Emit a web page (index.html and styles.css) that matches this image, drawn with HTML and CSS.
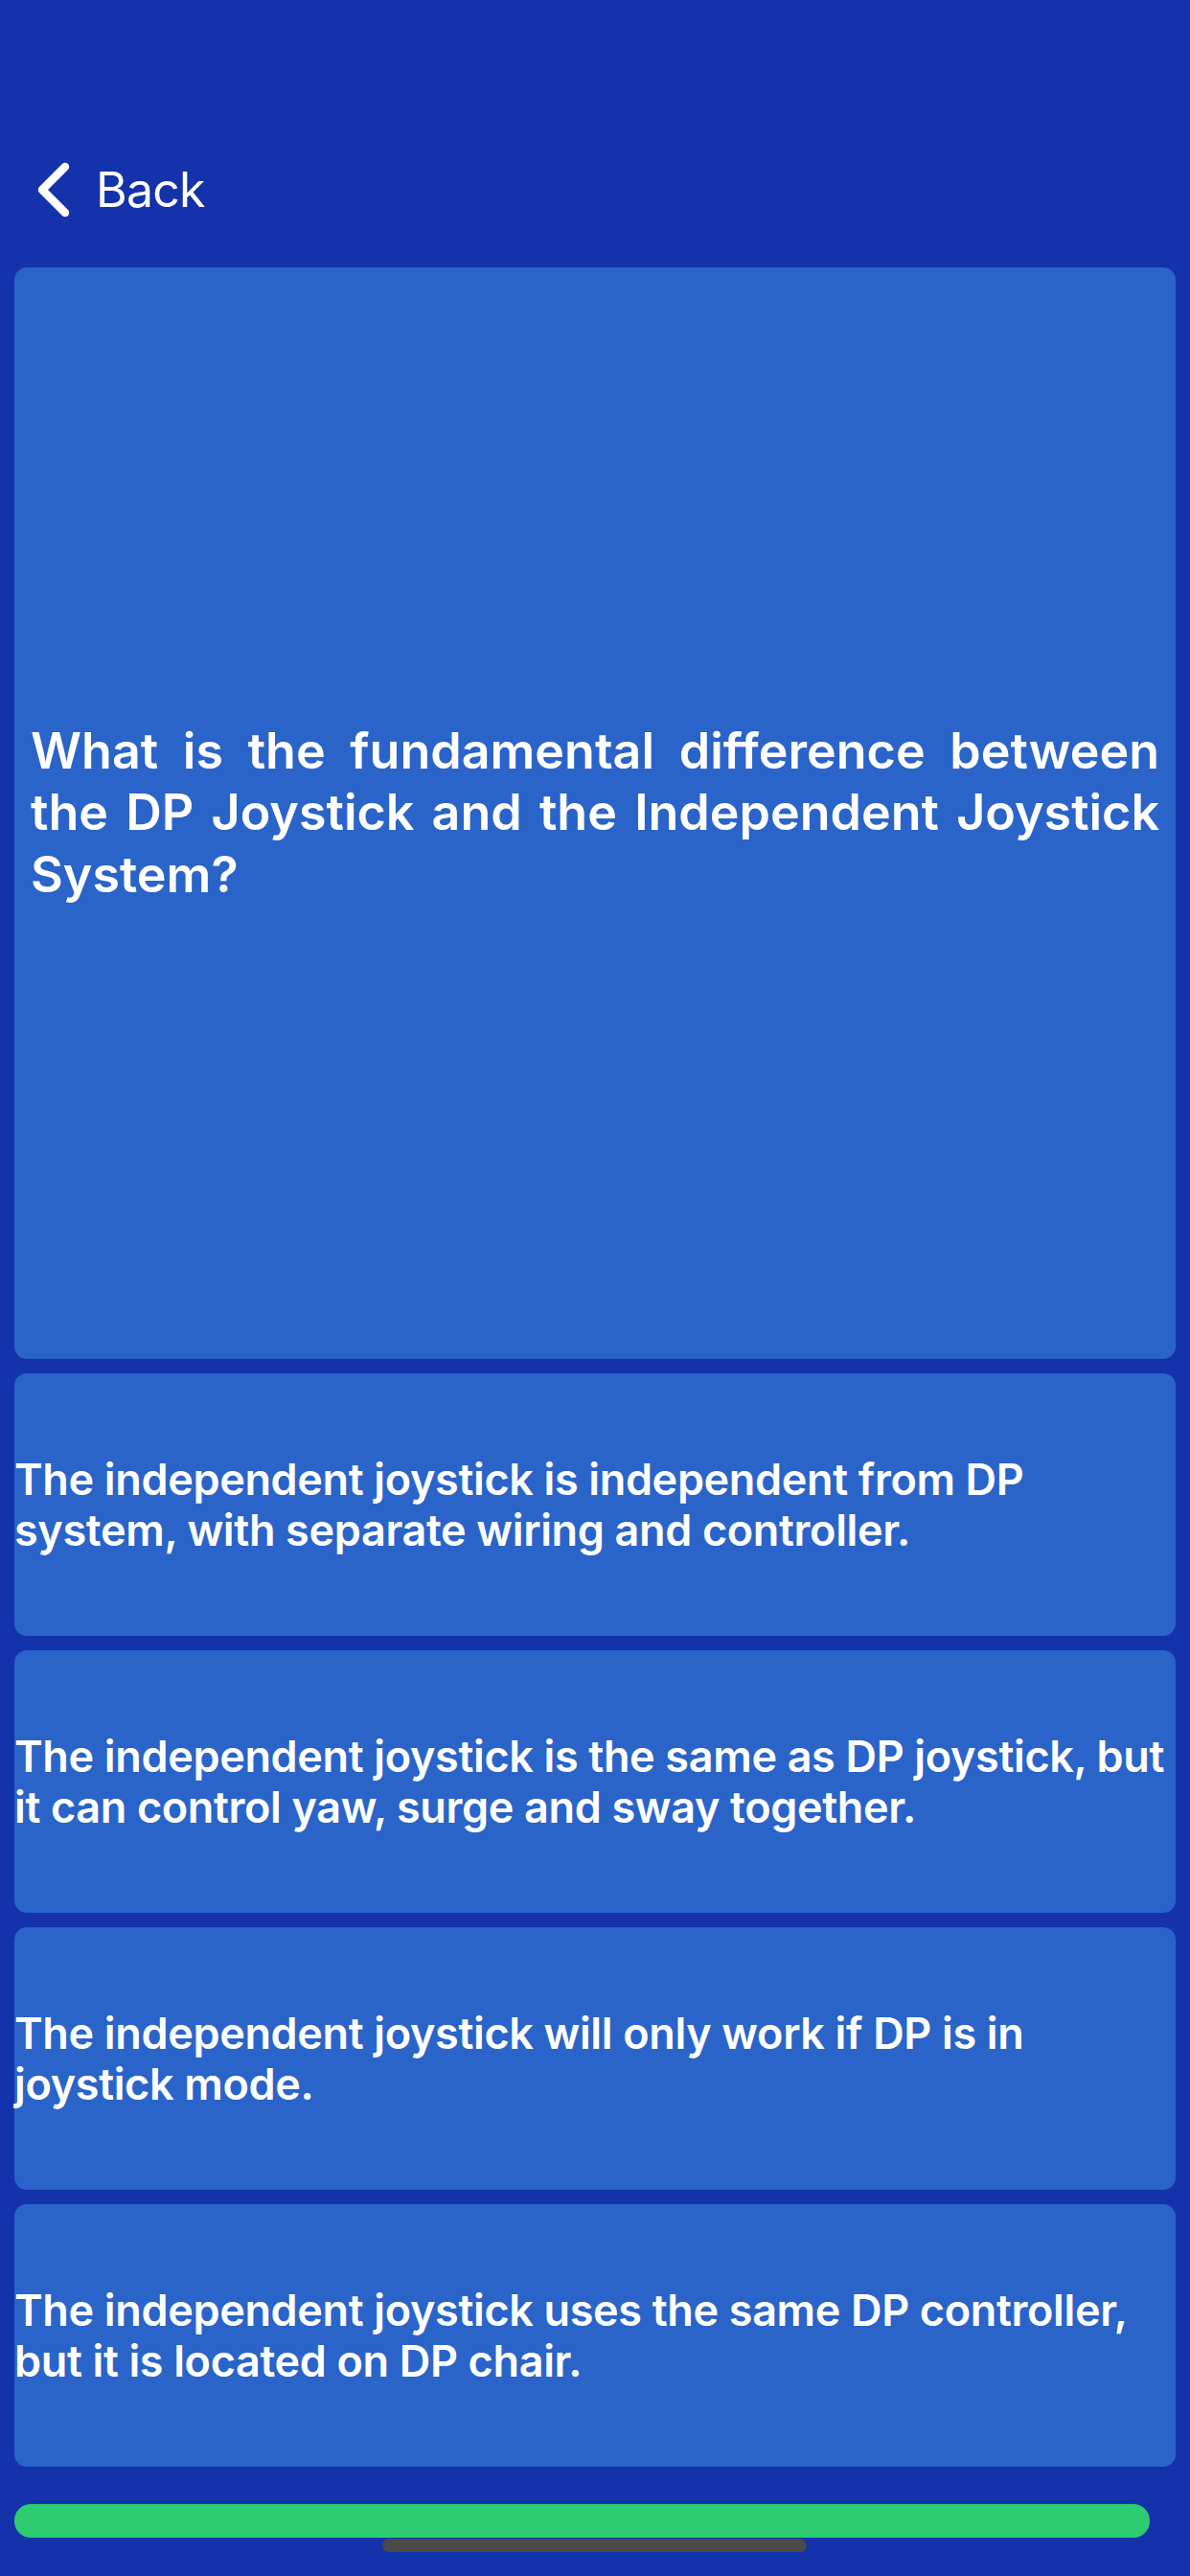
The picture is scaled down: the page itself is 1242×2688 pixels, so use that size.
FILE: index.html
```html
<!DOCTYPE html>
<html lang="en">
<head>
<meta charset="utf-8">
<title>Question</title>
<link rel="stylesheet" href="styles.css">
</head>
<body>
<div class="screen">
  <header class="topbar">
    <a class="back" href="#">
      <svg class="chev" width="34" height="58" viewBox="0 0 34 58" aria-hidden="true">
        <path d="M29 5 L5 29 L29 53" fill="none" stroke="#ffffff" stroke-width="8.5" stroke-linecap="round" stroke-linejoin="round"/>
      </svg>
      <span class="back-label">Back</span>
    </a>
  </header>
  <main class="content">
    <section class="card question">
      <p class="question-text">What is the fundamental difference between the DP Joystick and the Independent Joystick System?</p>
    </section>
    <button class="card answer">The independent joystick is independent from DP system, with separate wiring and controller.</button>
    <button class="card answer">The independent joystick is the same as DP joystick, but it can control yaw, surge and sway together.</button>
    <button class="card answer">The independent joystick will only work if DP is in joystick mode.</button>
    <button class="card answer">The independent joystick uses the same DP controller, but it is located on DP chair.</button>
    <div class="progress"></div>
  </main>
  <div class="home-indicator"></div>
</div>
</body>
</html>
```

FILE: styles.css
```css
* { box-sizing: border-box; }
html, body {
  margin: 0;
  padding: 0;
  background: #1432aa;
}
body {
  font-family: Inter, "Noto Sans", "Liberation Sans", sans-serif;
  color: #ffffff;
}
.screen {
  position: relative;
  width: 1242px;
  height: 2688px;
  overflow: hidden;
  background: #1432aa;
}
.topbar {
  height: 279px;
  padding: 169px 0 0 39px;
}
.back {
  display: flex;
  align-items: center;
  gap: 27px;
  color: #ffffff;
  text-decoration: none;
  height: 58px;
}
.chev { display: block; }
.back-label {
  font-size: 50px;
  font-weight: 400;
  line-height: 58px;
  letter-spacing: -0.8px;
}
.content {
  display: flex;
  flex-direction: column;
  gap: 15px;
  padding: 0 15px;
}
.card {
  background: #2a64c8;
  border-radius: 13px;
  border: none;
  color: #ffffff;
  font-family: inherit;
  width: 100%;
  display: flex;
  align-items: center;
}
.question {
  height: 1139px;
  padding: 0 17px;
}
.question-text {
  margin: 0;
  font-size: 52px;
  font-weight: 600;
  line-height: 64.5px;
  text-align: justify;
}
.answer {
  height: 274px;
  padding: 0;
  font-size: 45px;
  font-weight: 600;
  line-height: 53px;
  text-align: left;
  letter-spacing: -0.35px;
  cursor: pointer;
}
.progress {
  margin-top: 24px;
  width: 1185px;
  height: 35px;
  background: #2ecc71;
  border-radius: 17px / 17px;
}
.home-indicator {
  position: absolute;
  left: 399px;
  bottom: 25px;
  width: 443px;
  height: 14px;
  border-radius: 7px;
  background: #4a4a4a;
}
```
